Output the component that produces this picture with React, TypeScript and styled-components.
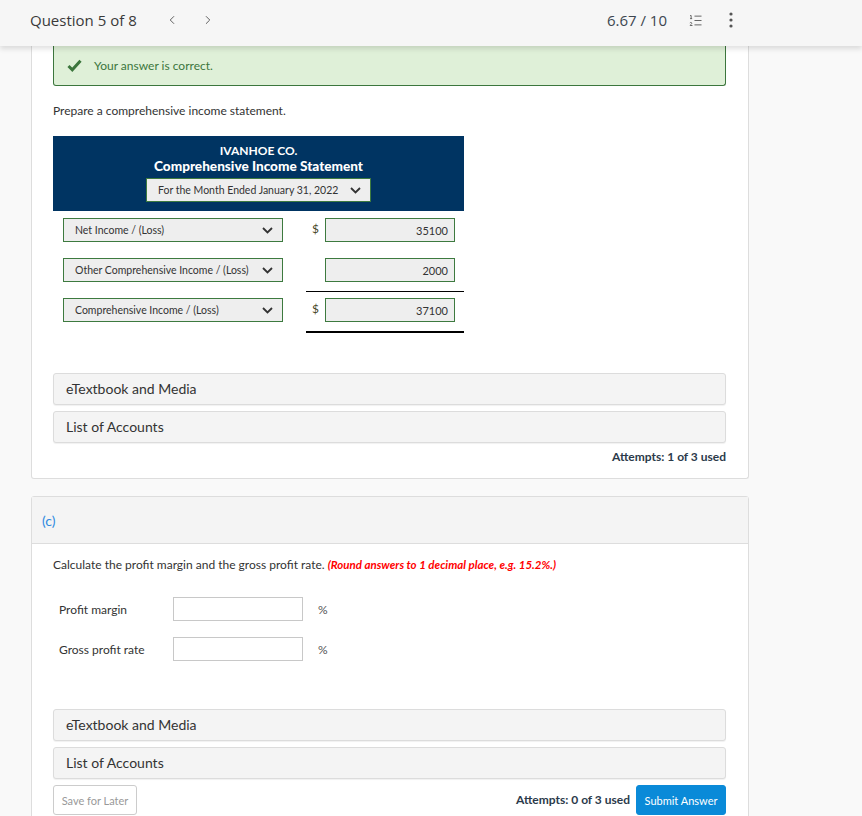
import styled, { createGlobalStyle } from "styled-components";
import { ChevronLeft, ChevronRight, ListOrdered } from "lucide-react";

const GlobalStyle = createGlobalStyle`
  html, body {
    margin: 0;
    padding: 0;
    background: #f9f9f9;
  }
  body {
    font-family: Lato, "Open Sans", sans-serif;
    color: #333;
  }
  * {
    box-sizing: border-box;
  }
`;

const Page = styled.div`
  width: 862px;
  height: 816px;
  overflow: hidden;
  background: #f9f9f9;
`;

const TopBar = styled.header`
  position: relative;
  z-index: 2;
  height: 46px;
  display: flex;
  align-items: center;
  padding: 0 129px 6px 30px;
  background: #f6f6f6;
  box-shadow: 0 3px 5px rgba(0, 0, 0, 0.12);
  font-family: "Open Sans", sans-serif;
  color: #3a3a3a;
`;

const QuestionTitle = styled.span`
  font-size: 15px;
`;

const NavButton = styled.span`
  display: inline-flex;
  color: #555;
  margin-left: ${({ $gap }: { $gap: number }) => $gap}px;
`;

const Score = styled.span`
  margin-left: auto;
  font-size: 15px;
  color: #3d4650;
`;

const IconSlot = styled.span`
  display: inline-flex;
  color: #666;
  margin-left: ${({ $gap }: { $gap: number }) => $gap}px;
`;

const Main = styled.main`
  padding-left: 31px;
  width: 749px;
`;

const Card = styled.section<{ $clipped?: boolean }>`
  background: #fff;
  border: 1px solid #ddd;
  border-top: ${({ $clipped }) => ($clipped ? "none" : "1px solid #ddd")};
  border-radius: ${({ $clipped }) => ($clipped ? "0 0 3px 3px" : "3px")};
  margin-bottom: 17px;
`;

const CardBody = styled.div<{ $top: number; $bottom: number }>`
  padding: ${({ $top, $bottom }) => `${$top}px 22px ${$bottom}px 21px`};
`;

const Banner = styled.div`
  height: 40px;
  display: flex;
  align-items: center;
  padding-left: 13px;
  background: #dff0d8;
  border: 1px solid #3c763d;
  border-top: none;
  border-radius: 0 0 3px 3px;
  color: #3c763d;
  font-size: 12px;
`;

const BannerText = styled.span`
  margin-left: 12px;
`;

const Prompt = styled.p<{ $top: number }>`
  margin: ${({ $top }) => $top}px 0 0;
  font-size: 12px;
  line-height: 17px;
`;

const Statement = styled.div`
  width: 411px;
  margin-top: 17px;
`;

const StatementHead = styled.div`
  background: #003462;
  color: #fff;
  height: 75px;
  padding-top: 7px;
  display: flex;
  flex-direction: column;
  align-items: center;
`;

const Company = styled.div`
  font-size: 12px;
  font-weight: 700;
  line-height: 15px;
`;

const StatementTitle = styled.div`
  font-size: 13.6px;
  font-weight: 900;
  line-height: 17px;
`;

const Select = styled.div<{ $width: number }>`
  width: ${({ $width }) => $width}px;
  height: 24px;
  display: flex;
  align-items: center;
  justify-content: space-between;
  padding: 0 9px 0 11px;
  background: #eee;
  border: 1px solid #3d7a3f;
  color: #333;
  font-size: 10.5px;
`;

const DateSelect = styled(Select)`
  margin-top: 3px;
`;

const Rows = styled.div`
  padding-left: 10px;
  margin-top: 7px;
`;

const Row = styled.div<{ $top: number }>`
  display: flex;
  align-items: flex-start;
  margin-top: ${({ $top }) => $top}px;
`;

const AmountCol = styled.div<{ $rule: number }>`
  width: 158px;
  margin-left: 23px;
  display: flex;
  align-items: flex-start;
  padding-right: 9px;
  padding-bottom: ${({ $rule }) => ($rule ? 9 : 0)}px;
  border-bottom: ${({ $rule }) => ($rule ? `${$rule}px solid #000` : "none")};
`;

const Dollar = styled.span`
  width: 19px;
  padding-left: 6px;
  font-size: 12px;
  line-height: 22px;
  color: #4a4a2a;
`;

const AmountBox = styled.div`
  width: 130px;
  height: 24px;
  display: flex;
  align-items: center;
  justify-content: flex-end;
  padding-right: 6px;
  background: #eee;
  border: 1px solid #3d7a3f;
  font-size: 11px;
  color: #333;
`;

const Accordions = styled.div<{ $top: number }>`
  margin-top: ${({ $top }) => $top}px;
`;

const AccordionItem = styled.div`
  height: 32px;
  line-height: 30px;
  padding-left: 12px;
  margin-bottom: 6px;
  background: #f4f4f4;
  border: 1px solid #dcdcdc;
  border-radius: 3px;
  box-shadow: 0 1px 1px rgba(0, 0, 0, 0.06);
  font-size: 14px;
  color: #333;
`;

const Attempts = styled.div`
  text-align: right;
  font-size: 12px;
  font-weight: 700;
  line-height: 16px;
  color: #2b3a4a;
`;

const PartHeader = styled.div`
  height: 47px;
  display: flex;
  align-items: center;
  padding-left: 10px;
  background: #f4f4f4;
  border-bottom: 1px solid #ddd;
  font-size: 14px;
  color: #2f8ae0;
`;

const Hint = styled.span`
  color: #f00;
  font-style: italic;
  font-weight: 700;
  font-size: 11.5px;
`;

const AnswerRow = styled.div<{ $top: number }>`
  display: flex;
  align-items: center;
  padding-left: 6px;
  margin-top: ${({ $top }) => $top}px;
  font-size: 12px;
`;

const AnswerLabel = styled.span`
  width: 114px;
`;

const AnswerInput = styled.div`
  width: 130px;
  height: 24px;
  background: #fff;
  border: 1px solid #c8c8c8;
`;

const Unit = styled.span`
  margin-left: 15px;
  color: #555;
`;

const Footer = styled.div`
  display: flex;
  align-items: center;
  margin-top: 1px;
`;

const Button = styled.button<{ $primary?: boolean; $width: number }>`
  width: ${({ $width }) => $width}px;
  height: 30px;
  padding: 0;
  font-family: Lato, sans-serif;
  font-size: 11px;
  border-radius: 3px;
  cursor: pointer;
  border: 1px solid ${({ $primary }) => ($primary ? "#0a8ad8" : "#ccc")};
  background: ${({ $primary }) => ($primary ? "#0a8ad8" : "#fff")};
  color: ${({ $primary }) => ($primary ? "#fff" : "#999")};
`;

const FooterAttempts = styled(Attempts)`
  margin-left: auto;
  margin-right: 6px;
`;

const Chevron = () => (
  <svg width="11" height="7" viewBox="0 0 11 7">
    <path d="M1 1 L5.5 5.5 L10 1" fill="none" stroke="#333" strokeWidth="1.8" />
  </svg>
);

const Check = () => (
  <svg width="15" height="13" viewBox="0 0 15 13">
    <path
      d="M1.5 7 L5.3 10.8 L13.5 1.8"
      fill="none"
      stroke="#3c763d"
      strokeWidth="3"
    />
  </svg>
);

const Kebab = () => (
  <svg width="4" height="16" viewBox="0 0 4 16">
    <circle cx="2" cy="2" r="1.6" fill="#555" />
    <circle cx="2" cy="8" r="1.6" fill="#555" />
    <circle cx="2" cy="14" r="1.6" fill="#555" />
  </svg>
);

const lines = [
  { label: "Net Income / (Loss)", dollar: true, value: "35100", rule: 0, top: 0 },
  { label: "Other Comprehensive Income / (Loss)", dollar: false, value: "2000", rule: 1, top: 16 },
  { label: "Comprehensive Income / (Loss)", dollar: true, value: "37100", rule: 2, top: 6 },
];

function Resources({ top }: { top: number }) {
  return (
    <Accordions $top={top}>
      <AccordionItem>eTextbook and Media</AccordionItem>
      <AccordionItem>List of Accounts</AccordionItem>
    </Accordions>
  );
}

export default function App() {
  return (
    <Page>
      <GlobalStyle />
      <TopBar>
        <QuestionTitle>Question 5 of 8</QuestionTitle>
        <NavButton $gap={28}>
          <ChevronLeft size={14} strokeWidth={1.6} />
        </NavButton>
        <NavButton $gap={22}>
          <ChevronRight size={14} strokeWidth={1.6} />
        </NavButton>
        <Score>6.67 / 10</Score>
        <IconSlot $gap={21}>
          <ListOrdered size={15} strokeWidth={1.6} />
        </IconSlot>
        <IconSlot $gap={26}>
          <Kebab />
        </IconSlot>
      </TopBar>

      <Main>
        <Card $clipped>
          <CardBody $top={0} $bottom={13}>
            <Banner>
              <Check />
              <BannerText>Your answer is correct.</BannerText>
            </Banner>
            <Prompt $top={16}>Prepare a comprehensive income statement.</Prompt>

            <Statement>
              <StatementHead>
                <Company>IVANHOE CO.</Company>
                <StatementTitle>Comprehensive Income Statement</StatementTitle>
                <DateSelect $width={225}>
                  <span>For the Month Ended January 31, 2022</span>
                  <Chevron />
                </DateSelect>
              </StatementHead>
              <Rows>
                {lines.map((line) => (
                  <Row key={line.label} $top={line.top}>
                    <Select $width={220}>
                      <span>{line.label}</span>
                      <Chevron />
                    </Select>
                    <AmountCol $rule={line.rule}>
                      <Dollar>{line.dollar ? "$" : ""}</Dollar>
                      <AmountBox>{line.value}</AmountBox>
                    </AmountCol>
                  </Row>
                ))}
              </Rows>
            </Statement>

            <Resources top={40} />
            <Attempts>Attempts: 1 of 3 used</Attempts>
          </CardBody>
        </Card>

        <Card>
          <PartHeader>(c)</PartHeader>
          <CardBody $top={12} $bottom={20}>
            <Prompt $top={0}>
              Calculate the profit margin and the gross profit rate.{" "}
              <Hint>(Round answers to 1 decimal place, e.g. 15.2%.)</Hint>
            </Prompt>
            <AnswerRow $top={24}>
              <AnswerLabel>Profit margin</AnswerLabel>
              <AnswerInput />
              <Unit>%</Unit>
            </AnswerRow>
            <AnswerRow $top={16}>
              <AnswerLabel>Gross profit rate</AnswerLabel>
              <AnswerInput />
              <Unit>%</Unit>
            </AnswerRow>
            <Resources top={48} />
            <Footer>
              <Button $width={84}>Save for Later</Button>
              <FooterAttempts>Attempts: 0 of 3 used</FooterAttempts>
              <Button $primary $width={90}>
                Submit Answer
              </Button>
            </Footer>
          </CardBody>
        </Card>
      </Main>
    </Page>
  );
}
